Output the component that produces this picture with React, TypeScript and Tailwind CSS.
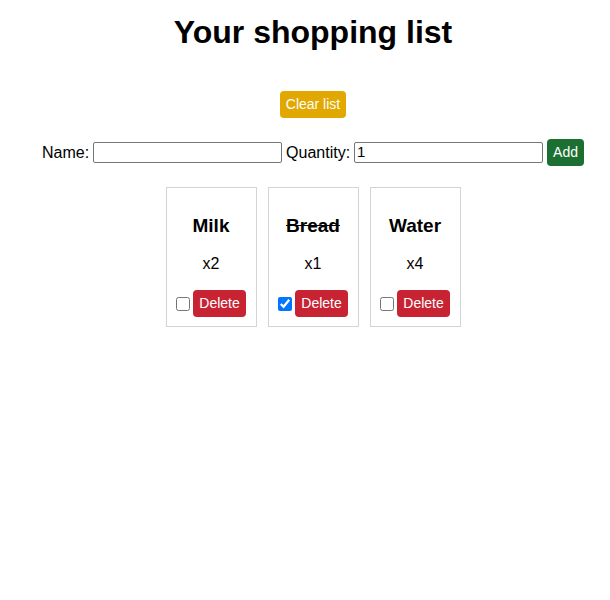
import { useState } from 'react';

type Item = { id: number; name: string; quantity: number; bought: boolean };

const initialItems: Item[] = [
  { id: 1, name: 'Milk', quantity: 2, bought: false },
  { id: 2, name: 'Bread', quantity: 1, bought: true },
  { id: 3, name: 'Water', quantity: 4, bought: false },
];

export default function App() {
  const [items, setItems] = useState<Item[]>(initialItems);
  const [name, setName] = useState('');
  const [quantity, setQuantity] = useState(1);

  const toggle = (id: number) =>
    setItems((prev) => prev.map((i) => (i.id === id ? { ...i, bought: !i.bought } : i)));

  const remove = (id: number) => setItems((prev) => prev.filter((i) => i.id !== id));

  const add = () => {
    if (!name.trim()) return;
    setItems((prev) => [...prev, { id: Date.now(), name, quantity, bought: false }]);
    setName('');
    setQuantity(1);
  };

  return (
    <div className="min-h-[600px] pl-[16px] bg-white text-black font-['Liberation_Sans',Arial,sans-serif] flex flex-col items-center">
      <h1 className="mt-[14px] text-[32px] font-bold leading-[37px]">Your shopping list</h1>

      <button
        onClick={() => setItems([])}
        className="mt-[40px] h-[27px] px-[6px] rounded-[4px] bg-[#e0a800] text-white text-[14px]">
        Clear list
      </button>

      <div className="mt-[21px] flex items-center h-[27px] text-[16px]">
        <label htmlFor="name">Name:</label>
        <input
          id="name"
          value={name}
          onChange={(e) => setName(e.target.value)}
          className="ml-[4px] w-[189px] h-[21px] px-[2px] border border-[#767676] rounded-[2px] text-[15px]"
        />
        <label htmlFor="qty" className="ml-[4px]">Quantity:</label>
        <input
          id="qty"
          type="number"
          value={quantity}
          onChange={(e) => setQuantity(Number(e.target.value))}
          className="ml-[4px] w-[189px] h-[21px] px-[2px] border border-[#767676] rounded-[2px] text-[15px]"
        />
        <button
          onClick={add}
          className="ml-[4px] h-[27px] px-[6px] rounded-[4px] bg-[#1b6f30] text-white text-[14px]">
          Add
        </button>
      </div>

      <div className="mt-[21px] flex gap-[11px]">
        {items.map((item) => (
          <div
            key={item.id}
            className="w-[91px] h-[140px] border border-[#d4d4d4] flex flex-col items-center">
            <h3
              className={`mt-[27px] text-[19px] font-bold leading-[22px] ${item.bought ? 'line-through' : ''}`}>
              {item.name}
            </h3>
            <p className="mt-[18px] text-[16px] leading-[18px]">x{item.quantity}</p>
            <div className="mt-[17px] flex items-center">
              <input
                type="checkbox"
                checked={item.bought}
                onChange={() => toggle(item.id)}
                className="w-[14px] h-[14px] mr-[3px] accent-[#0075ff]"
              />
              <button
                onClick={() => remove(item.id)}
                className="h-[27px] px-[6px] rounded-[4px] bg-[#c82333] text-white text-[14px]">
                Delete
              </button>
            </div>
          </div>
        ))}
      </div>
    </div>
  );
}
